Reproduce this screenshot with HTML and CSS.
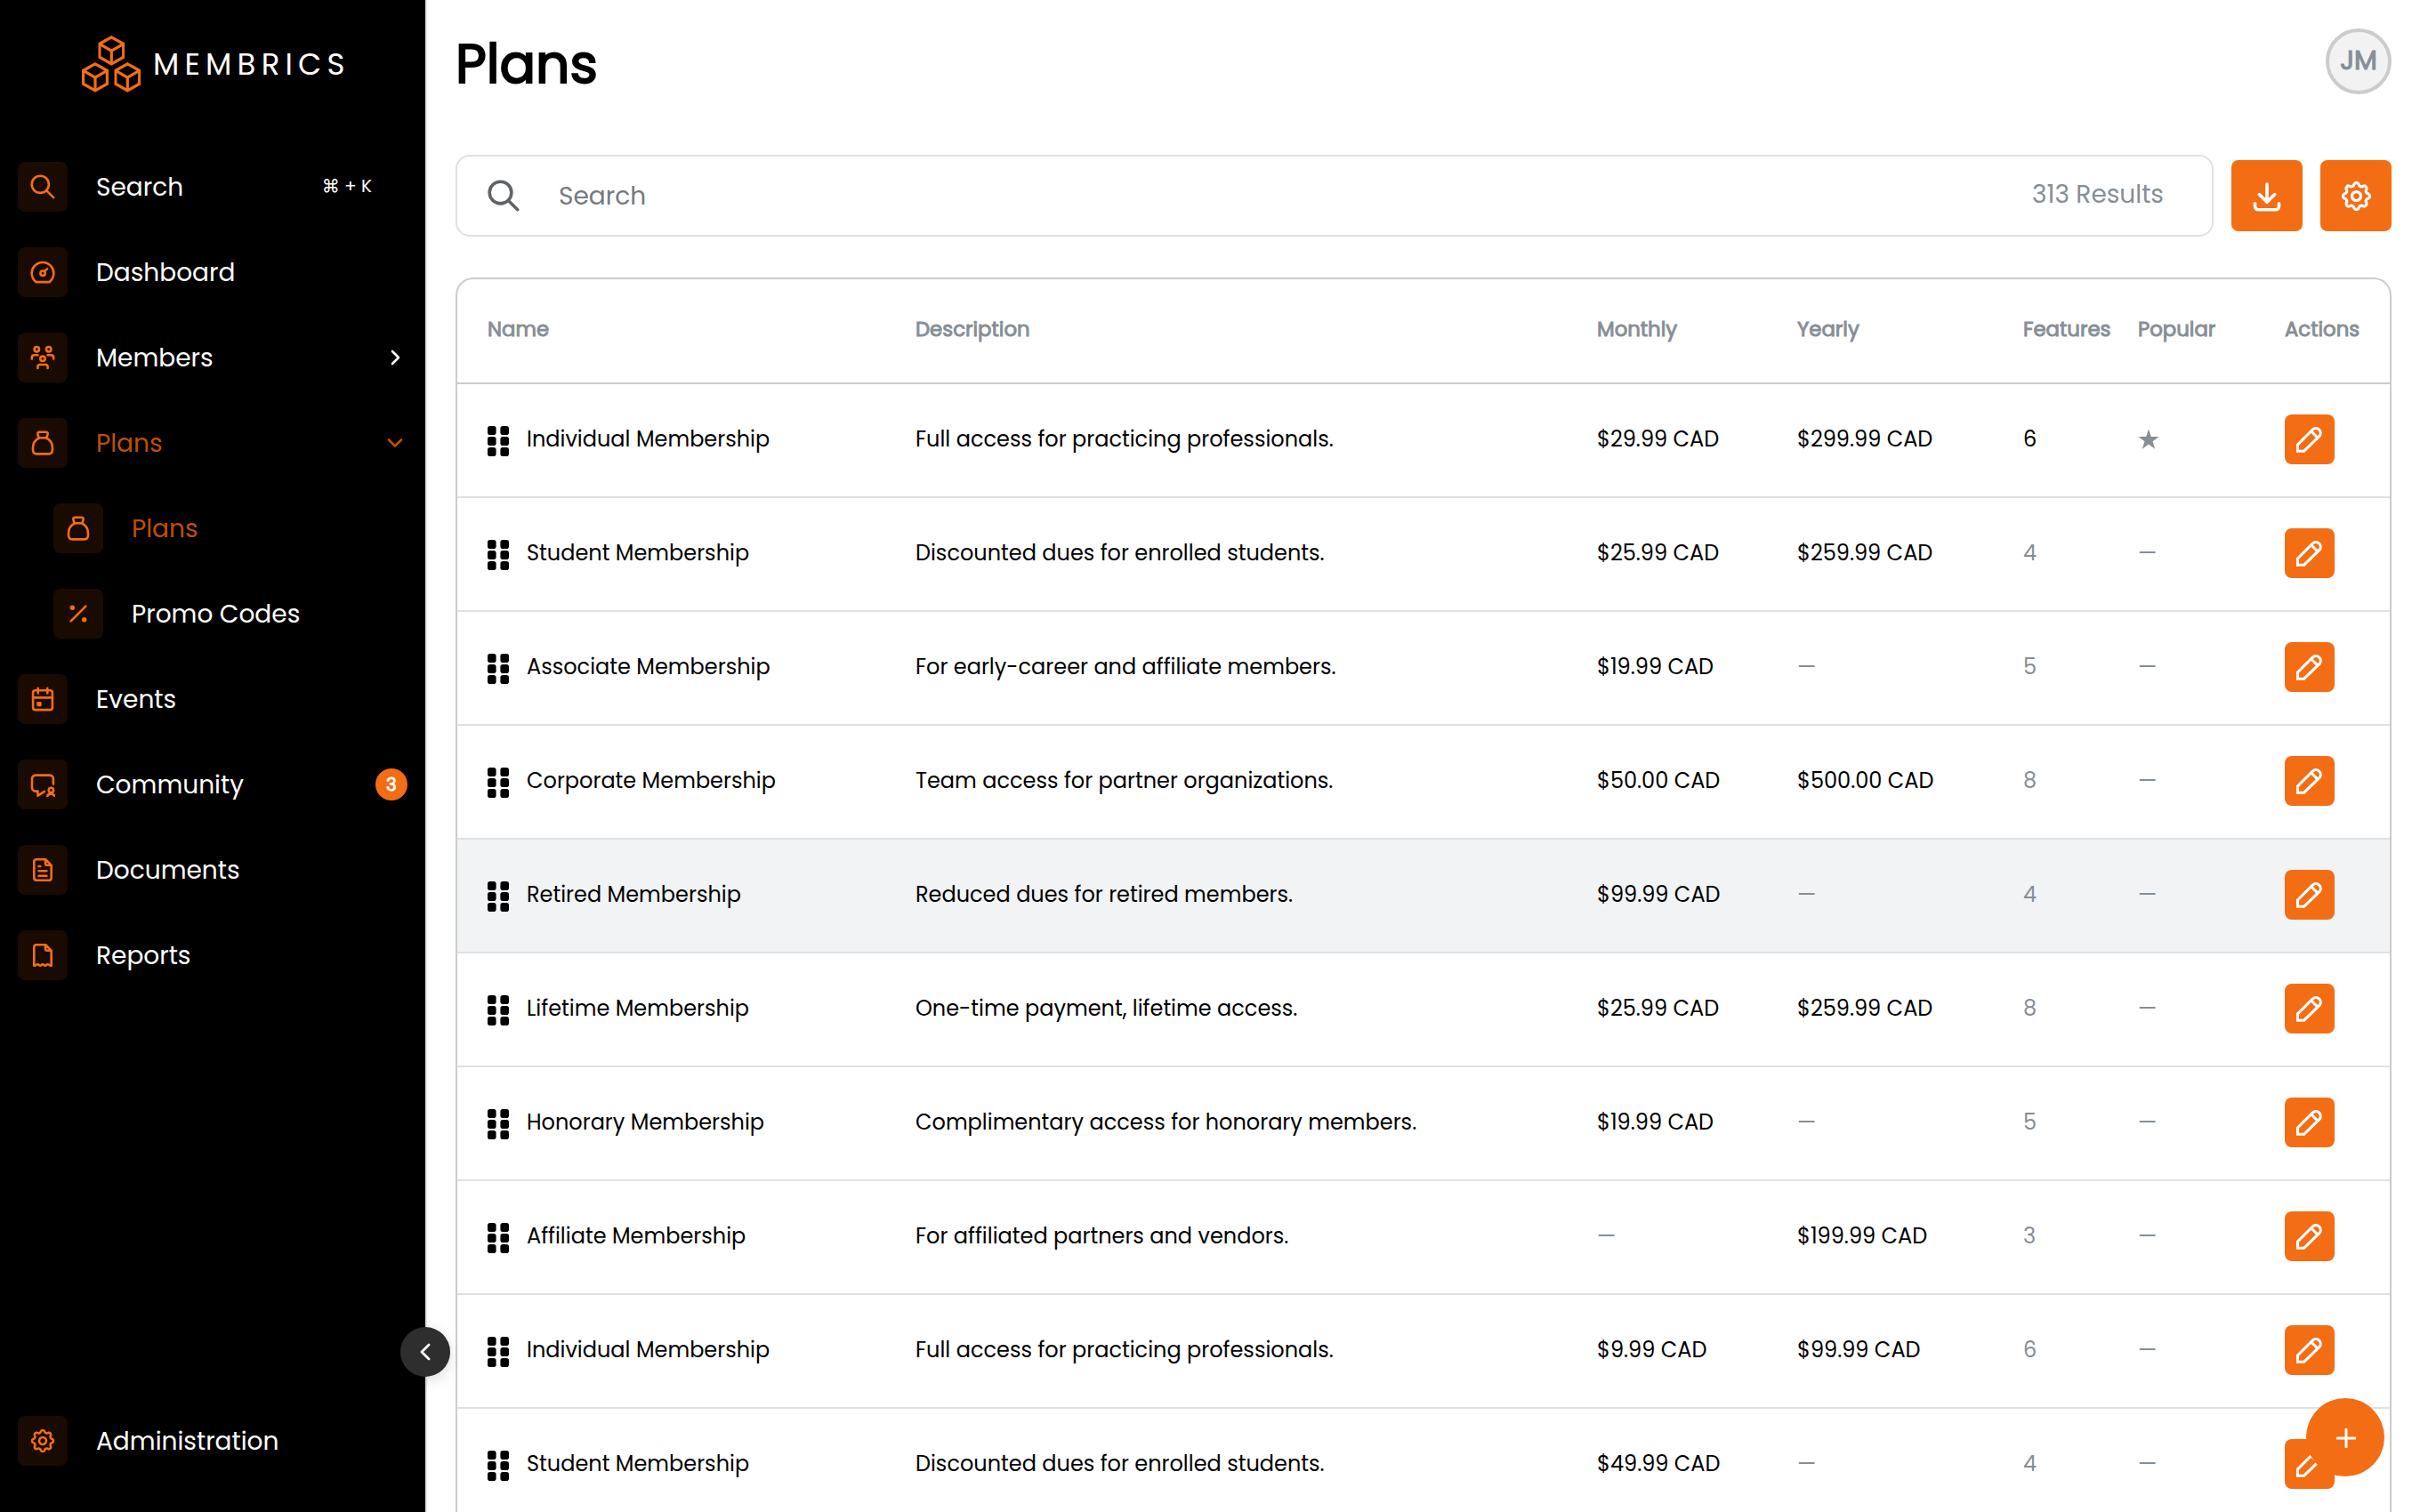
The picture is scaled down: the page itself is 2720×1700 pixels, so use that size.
FILE: index.html
```
<!DOCTYPE html>
<html lang="en">
<head>
<meta charset="utf-8">
<title>Plans – Membrics</title>
<link rel="stylesheet" href="styles.css">
</head>
<body>
<svg class="sprite" aria-hidden="true">
  <symbol id="i-search" viewBox="14 14 28 28"><circle cx="25.3" cy="25.3" r="9.600"/><path d="M32.400 32.400 40.200 40.200"/></symbol>
  <symbol id="i-gauge" viewBox="14 14 28 28"><path d="M20.6 39.1A12.3 12.3 0 1 1 35.4 39.1Z"/><circle cx="28.1" cy="29.2" r="2.7"/><path d="M30.3 26.8 33 24.4"/></symbol>
  <symbol id="i-members" viewBox="14 14 28 28"><circle cx="21.3" cy="18.7" r="2.700"/><circle cx="34.7" cy="18.7" r="2.700"/><circle cx="28" cy="29.3" r="2.700"/><path d="M15.8 29.4v-1.3a2.8 2.8 0 0 1 2.8-2.8h3.9M33.5 25.3h3.9a2.8 2.8 0 0 1 2.8 2.8v1.3M22.4 40v-1.6a2.4 2.4 0 0 1 2.4-2.4h6.4a2.4 2.4 0 0 1 2.4 2.4V40"/></symbol>
  <symbol id="i-bag" viewBox="14 14 28 28"><path d="M24.3 22.2C19.8 24.3 17 28.6 17 33.4v2.3c0 3 2 4.7 5 4.7h12c3 0 5-1.700 5-4.7v-2.3c0-4.800-2.800-9.100-7.300-11.200"/><path d="M22.4 18.200c-.4-1.500.5-2.500 1.900-2.500h7.400c1.400 0 2.300 1 1.900 2.500l-.5 2.100c-.3 1.200-1 1.900-2.200 1.900h-5.800c-1.200 0-1.900-.7-2.200-1.900z"/></symbol>
  <symbol id="i-percent" viewBox="14 14 28 28"><path d="M19.700 36.300 36.300 19.700"/><circle class="solid" cx="21.300" cy="21.300" r="2.700"/><circle class="solid" cx="34.700" cy="34.700" r="2.700"/></symbol>
  <symbol id="i-calendar" viewBox="14 14 28 28"><rect x="17.100" y="18.300" width="21.800" height="21.800" rx="2.600"/><path d="M17 26.400h22M22.700 15.900v5.600M33.300 15.900v5.600"/><rect class="solid" x="21.300" y="31" width="5.400" height="5.200" rx="1"/></symbol>
  <symbol id="i-chat" viewBox="14 14 28 28"><path d="M39.900 27.600v-6a4 4 0 0 0-4-4H20a4 4 0 0 0-4 4v10a4 4 0 0 0 4 4h2.500v5.100l7.400-4.900"/><circle cx="37.400" cy="34.400" r="2.700"/><path d="M33.200 41a4.300 3.400 0 0 1 8.200 0"/></symbol>
  <symbol id="i-doc" viewBox="14 14 28 28"><path d="M20.900 16.200h10.300l6.500 6.600v14.300a2.600 2.600 0 0 1-2.600 2.600H20.900a2.600 2.600 0 0 1-2.600-2.600V18.800a2.600 2.600 0 0 1 2.600-2.600zM31 16.400v4.400a2 2 0 0 0 2 2h4.500M23.600 24h1.700M23.600 29.300h8.800M23.600 34.700h8.800"/></symbol>
  <symbol id="i-report" viewBox="14 14 28 28"><path d="M18.300 39.700V18.800a2.600 2.600 0 0 1 2.600-2.600h10.300l6.500 6.600v16.900c-1.600.7-2.600-1.700-4.200-1.500-1.400.2-1.500 1.400-2.700 1.400s-1.500-1.400-2.800-1.400-1.600 1.400-2.800 1.400-1.300-1.200-2.700-1.400c-1.600-.2-2.600 2.200-4.200 1.500zM31 16.400v4.400a2 2 0 0 0 2 2h4.500"/></symbol>
  <symbol id="i-gear" viewBox="14 14 28 28"><g transform="translate(28 28)"><path d="M10.700-2.080A2.300 2.300 0 0 1 10.700 2.080A2.500 2.500 0 0 0 9.040 6.090A2.300 2.300 0 0 1 6.090 9.040A2.500 2.500 0 0 0 2.080 10.700A2.300 2.300 0 0 1-2.080 10.700A2.500 2.500 0 0 0-6.090 9.040A2.300 2.300 0 0 1-9.040 6.090A2.500 2.500 0 0 0-10.700 2.080A2.300 2.300 0 0 1-10.700-2.080A2.500 2.500 0 0 0-9.040-6.090A2.300 2.300 0 0 1-6.090-9.040A2.500 2.500 0 0 0-2.080-10.700A2.300 2.300 0 0 1 2.080-10.700A2.500 2.500 0 0 0 6.090-9.040A2.300 2.300 0 0 1 9.040-6.090A2.500 2.500 0 0 0 10.700-2.080Z"/><circle r="4"/></g></symbol>
  <symbol id="i-pencil" viewBox="12 12 32 32"><path d="M14.500 41.200v-7.400L31.300 17.200a5.200 5.200 0 0 1 7.400 7.400L21.700 41.200ZM29.900 19l6.800 6.800"/></symbol>
  <symbol id="i-grip" viewBox="0 0 24 34"><rect width="9.600" height="10" rx="2.800"/><rect x="14.400" width="9.600" height="10" rx="2.800"/><rect y="12" width="9.600" height="10" rx="2.800"/><rect x="14.400" y="12" width="9.600" height="10" rx="2.800"/><rect y="24" width="9.600" height="10" rx="2.800"/><rect x="14.400" y="24" width="9.600" height="10" rx="2.800"/></symbol>
  <symbol id="i-star" viewBox="0 0 24 24"><path d="M12 .5 14.800 9H23.700L16.500 14.200 19.200 22.800 12 17.500 4.800 22.800 7.500 14.200.300 9H9.200Z"/></symbol>
  <symbol id="cube" viewBox="0 0 30 34"><path d="M15 1.900 28.400 9.300V24.200L15 31.800 1.600 24.200V9.300ZM1.600 9.300 15 17.200 28.400 9.300M15 17.200V31.800"/></symbol>
</svg>

<div class="app">
  <aside class="sidebar">
    <div class="brand">
      <svg class="brand-mark" viewBox="0 0 68 64">
        <use href="#cube" x="18.300" y="0" width="30" height="34"/>
        <use href="#cube" x="0" y="30" width="30" height="34"/>
        <use href="#cube" x="36.300" y="30" width="30" height="34"/>
      </svg>
      <span class="brand-name">MEMBRICS</span>
    </div>
    <nav class="nav">
      <a class="item"><span class="tile"><svg><use href="#i-search"/></svg></span><span class="label">Search</span><kbd class="shortcut">⌘ + K</kbd></a>
      <a class="item"><span class="tile"><svg><use href="#i-gauge"/></svg></span><span class="label">Dashboard</span></a>
      <a class="item"><span class="tile"><svg><use href="#i-members"/></svg></span><span class="label">Members</span><svg class="chevron" viewBox="0 0 20 20"><path d="M7 3l7 7-7 7"/></svg></a>
      <a class="item active"><span class="tile"><svg><use href="#i-bag"/></svg></span><span class="label">Plans</span><svg class="chevron" viewBox="0 0 20 20"><path d="M3 6.500l7 7 7-7"/></svg></a>
      <a class="item sub active"><span class="tile"><svg><use href="#i-bag"/></svg></span><span class="label">Plans</span></a>
      <a class="item sub"><span class="tile"><svg><use href="#i-percent"/></svg></span><span class="label">Promo Codes</span></a>
      <a class="item"><span class="tile"><svg><use href="#i-calendar"/></svg></span><span class="label">Events</span></a>
      <a class="item"><span class="tile"><svg><use href="#i-chat"/></svg></span><span class="label">Community</span><span class="count">3</span></a>
      <a class="item"><span class="tile"><svg><use href="#i-doc"/></svg></span><span class="label">Documents</span></a>
      <a class="item"><span class="tile"><svg><use href="#i-report"/></svg></span><span class="label">Reports</span></a>
      <a class="item bottom"><span class="tile"><svg><use href="#i-gear"/></svg></span><span class="label">Administration</span></a>
    </nav>
    <button class="collapse"><svg viewBox="0 0 20 20"><path d="M14 2 6 10l8 8"/></svg></button>
  </aside>

  <main class="main">
    <header class="page-head">
      <h1>Plans</h1>
      <span class="avatar">JM</span>
    </header>
    <div class="toolbar">
      <div class="search">
        <svg><use href="#i-search"/></svg>
        <span class="placeholder">Search</span>
        <span class="results">313 Results</span>
      </div>
      <button class="tool"><svg class="download" viewBox="0 0 80 80"><path d="M40 27v20M31.300 38.600 40 47.300l8.700-8.700M26.500 48.700v3.400a3.600 3.600 0 0 0 3.600 3.600h19.800a3.600 3.600 0 0 0 3.600-3.600v-3.400"/></svg></button>
      <button class="tool"><svg class="settings"><use href="#i-gear"/></svg></button>
    </div>

    <section class="table">
      <div class="row head"><span>Name</span><span>Description</span><span>Monthly</span><span>Yearly</span><span>Features</span><span>Popular</span><span>Actions</span></div>
      <div class="row"><span class="name"><svg class="grip"><use href="#i-grip"/></svg>Individual Membership</span><span>Full access for practicing professionals.</span><span>$29.99 CAD</span><span>$299.99 CAD</span><span>6</span><span class="muted"><svg class="star"><use href="#i-star"/></svg></span><button class="edit"><svg><use href="#i-pencil"/></svg></button></div>
      <div class="row"><span class="name"><svg class="grip"><use href="#i-grip"/></svg>Student Membership</span><span>Discounted dues for enrolled students.</span><span>$25.99 CAD</span><span>$259.99 CAD</span><span class="muted">4</span><span class="muted">—</span><button class="edit"><svg><use href="#i-pencil"/></svg></button></div>
      <div class="row"><span class="name"><svg class="grip"><use href="#i-grip"/></svg>Associate Membership</span><span>For early-career and affiliate members.</span><span>$19.99 CAD</span><span class="muted">—</span><span class="muted">5</span><span class="muted">—</span><button class="edit"><svg><use href="#i-pencil"/></svg></button></div>
      <div class="row"><span class="name"><svg class="grip"><use href="#i-grip"/></svg>Corporate Membership</span><span>Team access for partner organizations.</span><span>$50.00 CAD</span><span>$500.00 CAD</span><span class="muted">8</span><span class="muted">—</span><button class="edit"><svg><use href="#i-pencil"/></svg></button></div>
      <div class="row hovered"><span class="name"><svg class="grip"><use href="#i-grip"/></svg>Retired Membership</span><span>Reduced dues for retired members.</span><span>$99.99 CAD</span><span class="muted">—</span><span class="muted">4</span><span class="muted">—</span><button class="edit"><svg><use href="#i-pencil"/></svg></button></div>
      <div class="row"><span class="name"><svg class="grip"><use href="#i-grip"/></svg>Lifetime Membership</span><span>One-time payment, lifetime access.</span><span>$25.99 CAD</span><span>$259.99 CAD</span><span class="muted">8</span><span class="muted">—</span><button class="edit"><svg><use href="#i-pencil"/></svg></button></div>
      <div class="row"><span class="name"><svg class="grip"><use href="#i-grip"/></svg>Honorary Membership</span><span>Complimentary access for honorary members.</span><span>$19.99 CAD</span><span class="muted">—</span><span class="muted">5</span><span class="muted">—</span><button class="edit"><svg><use href="#i-pencil"/></svg></button></div>
      <div class="row"><span class="name"><svg class="grip"><use href="#i-grip"/></svg>Affiliate Membership</span><span>For affiliated partners and vendors.</span><span class="muted">—</span><span>$199.99 CAD</span><span class="muted">3</span><span class="muted">—</span><button class="edit"><svg><use href="#i-pencil"/></svg></button></div>
      <div class="row"><span class="name"><svg class="grip"><use href="#i-grip"/></svg>Individual Membership</span><span>Full access for practicing professionals.</span><span>$9.99 CAD</span><span>$99.99 CAD</span><span class="muted">6</span><span class="muted">—</span><button class="edit"><svg><use href="#i-pencil"/></svg></button></div>
      <div class="row"><span class="name"><svg class="grip"><use href="#i-grip"/></svg>Student Membership</span><span>Discounted dues for enrolled students.</span><span>$49.99 CAD</span><span class="muted">—</span><span class="muted">4</span><span class="muted">—</span><button class="edit"><svg><use href="#i-pencil"/></svg></button></div>
    </section>
  </main>
  <button class="fab"><svg viewBox="0 0 24 24"><path d="M12 2.200v19.600M2.200 12h19.600"/></svg></button>
</div>
</body>
</html>
```
FILE: styles.css
```
* { box-sizing: border-box; }

:root {
  --orange: #f36d15;
  --active: #bf4f00;
  --muted: #868e96;
  --line: #ccc;
}

body {
  margin: 0;
  background: #fff;
  color: #000;
  font-family: Poppins, Inter, sans-serif;
  font-size: 24px;
}

button { border: 0; padding: 0; font: inherit; }
h1 { margin: 0; }

svg {
  display: block;
  flex: none;
  fill: none;
  stroke: currentColor;
  stroke-width: 2.6;
  stroke-linecap: round;
  stroke-linejoin: round;
}
.solid { fill: currentColor; stroke: none; }
.sprite { position: absolute; width: 0; height: 0; }

.app { position: relative; display: flex; height: 1700px; overflow: hidden; }

/* Sidebar */
.sidebar {
  position: relative;
  flex: none;
  display: flex;
  flex-direction: column;
  width: 480px;
  background: #000;
  border-right: 2px solid #e3e3e6;
  color: #fff;
}
.brand { display: flex; height: 162px; padding: 40px 0 0 92px; gap: 12px; }
.brand-mark { width: 68px; height: 64px; color: var(--orange); stroke-width: 3.2; stroke-linejoin: miter; }
.brand-name { font-size: 34px; line-height: 64px; letter-spacing: 6.2px; }

.nav { flex: 1; display: flex; flex-direction: column; padding-bottom: 32px; }
.item { display: flex; align-items: center; height: 96px; padding: 0 20px; font-size: 28px; }
.item.sub { padding-left: 60px; }
.item.active { color: var(--active); }
.item.bottom { margin-top: auto; }
.tile {
  display: flex;
  align-items: center;
  justify-content: center;
  width: 56px;
  height: 56px;
  margin-right: 32px;
  border-radius: 8px;
  background: #1a0b02;
  color: var(--orange);
}
.tile svg { width: 28px; height: 28px; }
.label { flex: 1; padding-top: 2px; }
.shortcut { margin: 0 40px 2px 0; font-family: inherit; font-size: 20px; }
.chevron { width: 20px; height: 20px; margin-right: 4px; }
.count {
  width: 36px;
  border-radius: 18px;
  background: var(--orange);
  font-size: 20px;
  line-height: 36px;
  text-align: center;
  -webkit-text-stroke: .9px currentColor;
}
.collapse {
  position: absolute;
  z-index: 2;
  left: 450px;
  bottom: 152px;
  display: flex;
  align-items: center;
  justify-content: center;
  width: 56px;
  height: 56px;
  border-radius: 50%;
  background: #2e2e2e;
  color: #fff;
  box-shadow: 0 4px 16px rgba(0, 0, 0, .14);
}
.collapse svg { width: 20px; height: 20px; stroke-width: 2.8; }

/* Main column */
.main { flex: 1; padding: 32px 32px 0; }
.page-head { display: flex; justify-content: space-between; height: 142px; }
h1 { font-size: 60px; font-weight: 400; line-height: 80px; -webkit-text-stroke: 2px currentColor; }
.avatar {
  width: 74px;
  height: 74px;
  border: 4px solid var(--line);
  border-radius: 50%;
  background: #f2f2f2;
  color: var(--muted);
  font-size: 30px;
  line-height: 63px;
  text-align: center;
  -webkit-text-stroke: 1.1px currentColor;
}

.toolbar { display: flex; align-items: center; gap: 20px; height: 92px; margin-bottom: 46px; }
.search {
  flex: 1;
  display: flex;
  align-items: center;
  height: 92px;
  padding: 0 54px 0 34px;
  border: 2px solid #e0e0e6;
  border-radius: 16px;
  font-size: 28px;
}
.search svg { width: 36px; height: 36px; color: #5f6368; stroke-width: 2.800; }
.placeholder { flex: 1; margin-left: 44px; padding-top: 2px; color: #757a7f; }
.results { margin-bottom: 3px; color: var(--muted); }
.tool {
  display: flex;
  align-items: center;
  justify-content: center;
  width: 80px;
  height: 80px;
  border-radius: 8px;
  background: var(--orange);
  color: #fff;
}
.download { width: 80px; height: 80px; stroke-width: 3.6; }
.settings { width: 35px; height: 35px; }

/* Plans table */
.table { border: 2px solid var(--line); border-bottom: 0; border-radius: 20px 20px 0 0; overflow: hidden; }
.row {
  display: grid;
  grid-template-columns: 481px 766px 225px 254px 129px 165px 1fr;
  align-items: center;
  height: 128px;
  padding: 0 0 2px 34px;
  border-bottom: 2px solid #dee2e6;
}
.row > span { padding-bottom: 1px; }
.row.head {
  height: 118px;
  padding-bottom: 3px;
  border-color: var(--line);
  color: var(--muted);
  font-size: 22.8px;
  -webkit-text-stroke: .9px currentColor;
}
.row.hovered { background: #f1f3f5; }
.name { display: flex; align-items: center; gap: 20px; }
.grip { width: 24px; height: 34px; margin-top: 4px; fill: #000; stroke: none; }
.muted { color: var(--muted); }
.star { width: 24px; height: 24px; fill: currentColor; stroke: none; }
.edit {
  display: flex;
  align-items: center;
  justify-content: center;
  width: 56px;
  height: 56px;
  border-radius: 8px;
  background: var(--orange);
  color: #fff;
}
.edit svg { width: 32px; height: 32px; stroke-width: 3.1; stroke-linejoin: miter; }

.fab {
  position: absolute;
  right: 40px;
  bottom: 40px;
  display: flex;
  align-items: center;
  justify-content: center;
  width: 88px;
  height: 88px;
  padding: 2px 0 0 1px;
  border-radius: 50%;
  background: var(--orange);
  color: #fff;
}
.fab svg { width: 24px; height: 24px; stroke-width: 3; }
```
